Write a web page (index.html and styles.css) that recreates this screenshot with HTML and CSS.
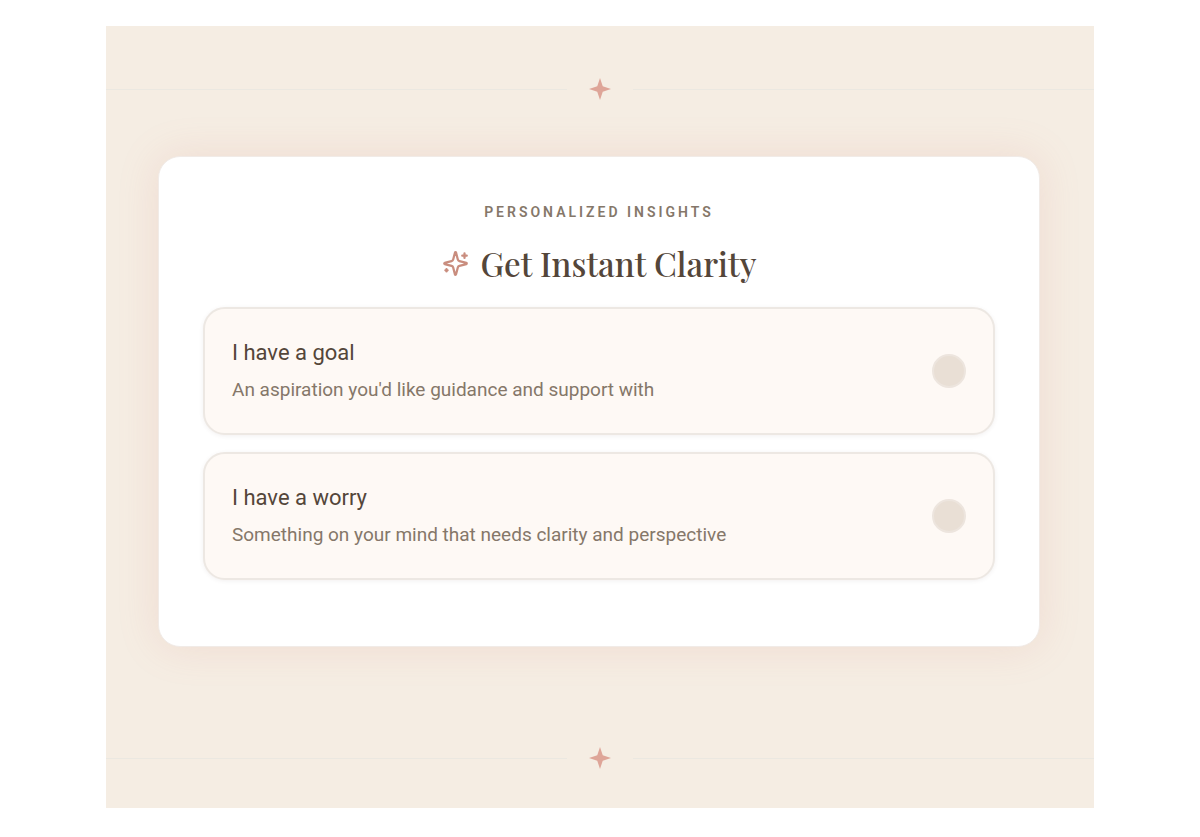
FILE: index.html
```
<!DOCTYPE html>
<html lang="en">
<head>
  <meta charset="utf-8">
  <meta name="viewport" content="width=device-width, initial-scale=1">
  <title>Get Instant Clarity</title>
  <link rel="stylesheet" href="styles.css">
</head>
<body>

  <main class="insights">
    <div class="divider">
      <svg class="divider-star" viewBox="0 0 24 24" aria-hidden="true">
        <path d="M12 0l3 9 9 3-9 3-3 9-3-9-9-3 9-3z"/>
      </svg>
    </div>

    <form class="card">
      <p class="eyebrow">Personalized Insights</p>
      <h1 class="title">
        <svg class="title-icon" viewBox="0 0 24 24" aria-hidden="true">
          <path d="M9.937 15.5A2 2 0 0 0 8.5 14.063l-6.135-1.582a.5.5 0 0 1 0-.962L8.5 9.936A2 2 0 0 0 9.937 8.5l1.582-6.135a.5.5 0 0 1 .963 0L14.063 8.5A2 2 0 0 0 15.5 9.937l6.135 1.581a.5.5 0 0 1 0 .964L15.5 14.063a2 2 0 0 0-1.437 1.437l-1.582 6.135a.5.5 0 0 1-.963 0z"/>
          <path d="M20 3v4M22 5h-4M4 17v2M5 18H3"/>
        </svg>
        <span>Get Instant Clarity</span>
      </h1>

      <div class="options">
        <label class="option" for="goal">
          <span class="option-text">
            <span class="option-name">I have a goal</span>
            <span class="option-hint">An aspiration you'd like guidance and support with</span>
          </span>
          <input class="option-radio" type="radio" id="goal" name="topic" value="goal">
        </label>
        <label class="option" for="worry">
          <span class="option-text">
            <span class="option-name">I have a worry</span>
            <span class="option-hint">Something on your mind that needs clarity and perspective</span>
          </span>
          <input class="option-radio" type="radio" id="worry" name="topic" value="worry">
        </label>
      </div>
    </form>

    <div class="divider">
      <svg class="divider-star" viewBox="0 0 24 24" aria-hidden="true">
        <path d="M12 0l3 9 9 3-9 3-3 9-3-9-9-3 9-3z"/>
      </svg>
    </div>
  </main>

</body>
</html>
```

FILE: styles.css
```
* {
  box-sizing: border-box;
}

body {
  margin: 26px 106px 29px;
  background: #fff;
  color: #54463a;
  font-family: Roboto, "Liberation Sans", sans-serif;
}

.insights {
  padding: 52px 0 39px;
  background: #f5ede3;
}

/* Divider */
.divider {
  display: flex;
  align-items: center;
  gap: 22px;
}

.divider::before,
.divider::after {
  content: "";
  flex: 1;
  height: 1px;
  background: #ebe8e1;
}

.divider-star {
  width: 22px;
  height: 22px;
  fill: #dea598;
}

/* Card */
.card {
  margin: 56px 54px 100px 52px;
  padding: 44px 44px 66px;
  background: #fff;
  border: 1px solid #f1ebe7;
  border-radius: 22px;
  box-shadow: 0 0 40px rgba(222, 140, 130, 0.18);
}

.eyebrow {
  margin: 0;
  color: #857769;
  font-size: 14px;
  font-weight: 600;
  line-height: 22px;
  letter-spacing: 3px;
  text-align: center;
  text-transform: uppercase;
}

.title {
  display: flex;
  align-items: center;
  justify-content: center;
  gap: 12px;
  margin: 18px 0 22px;
  font-family: "Playfair Display", "Liberation Serif", serif;
  font-size: 33px;
  font-weight: 500;
  line-height: 44px;
}

.title-icon {
  width: 27px;
  height: 27px;
  fill: none;
  stroke: #c98d7e;
  stroke-width: 2;
  stroke-linecap: round;
  stroke-linejoin: round;
}

/* Options */
.options {
  display: grid;
  gap: 17px;
}

.option {
  display: flex;
  align-items: center;
  justify-content: space-between;
  gap: 20px;
  padding: 28px 27px;
  background: #fef9f5;
  border: 2px solid #ede8e3;
  border-radius: 22px;
  box-shadow: 0 1px 4px rgba(84, 70, 58, 0.08);
  cursor: pointer;
}

.option-text {
  display: grid;
}

.option-name {
  font-size: 22px;
  line-height: 32px;
}

.option-hint {
  padding-top: 6px;
  color: #857769;
  font-size: 19px;
  line-height: 30px;
}

.option-radio {
  appearance: none;
  flex: none;
  width: 34px;
  height: 34px;
  margin: 0;
  background: #e9dfd5;
  border: 2px solid #ede5de;
  border-radius: 50%;
  cursor: pointer;
}

.option-radio:checked {
  background: #dea598;
}
```
